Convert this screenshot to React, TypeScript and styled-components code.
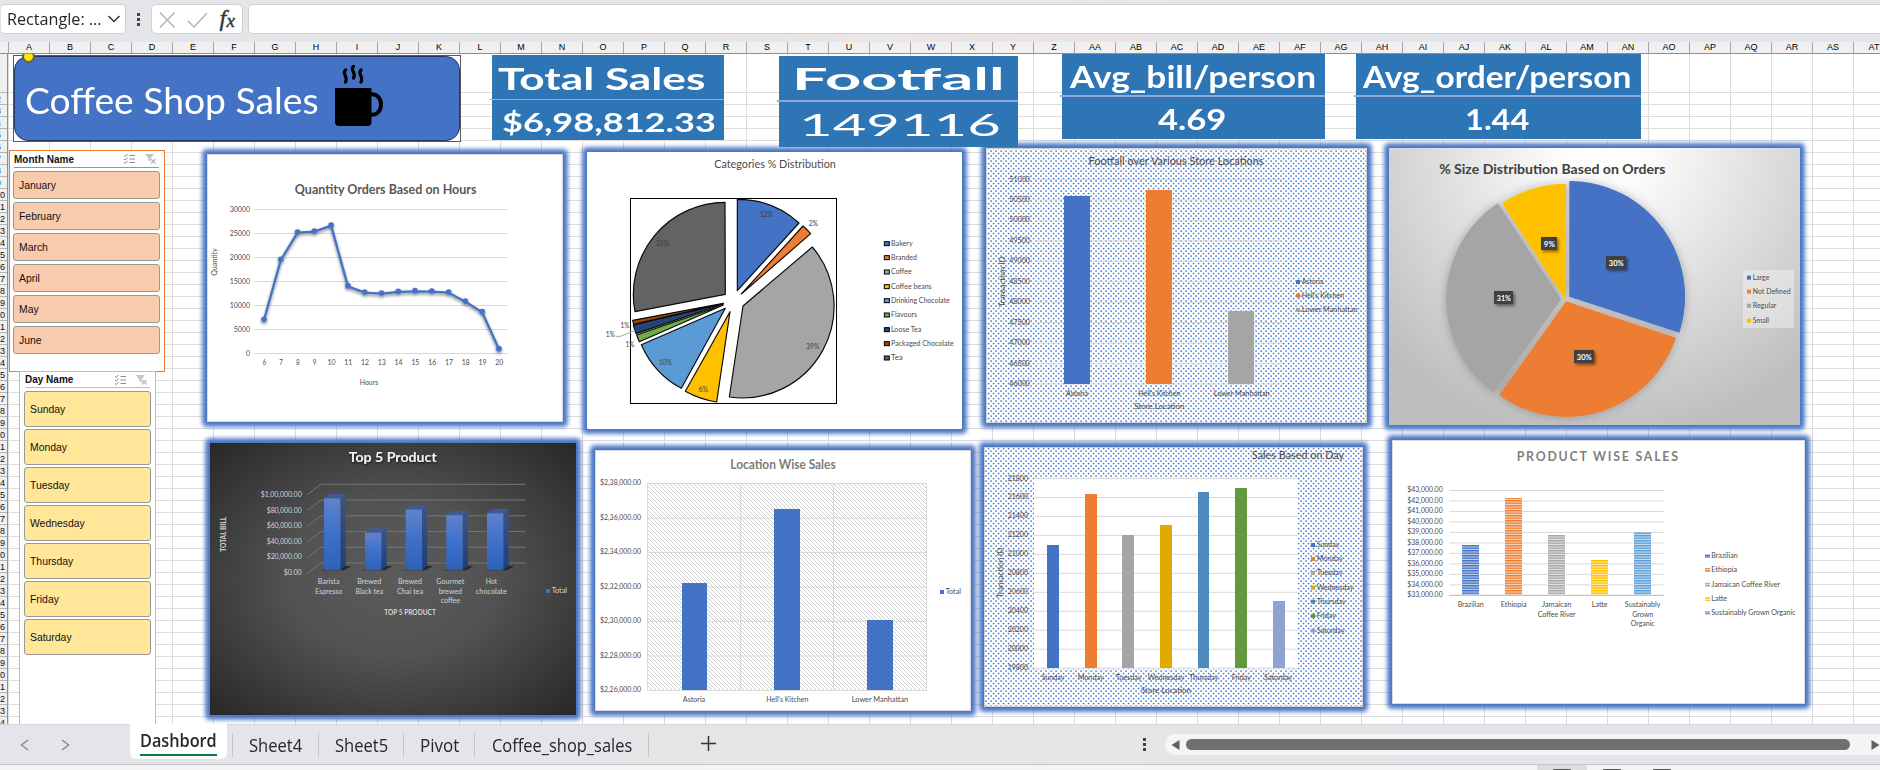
import React, { useLayoutEffect, useRef, useState } from "react";
import styled, { createGlobalStyle } from "styled-components";

const UI = '"Open Sans", "Noto Sans", sans-serif';
const OFFICE = 'Lato, "Open Sans", sans-serif';
const ARIAL = '"Liberation Sans", Arial, sans-serif';
const SHEET_TOP = 54;
const ROW_HEAD = 8;

const GlobalStyle = createGlobalStyle`
  * { box-sizing: border-box; }
  html, body { margin: 0; padding: 0; overflow: hidden; background: #fff; }
`;

const Page = styled.div`
  width: 1880px;
  height: 770px;
  display: flex;
  flex-direction: column;
  overflow: hidden;
  font-family: ${UI};
  background: #fff;
`;

/* ---------- stretched text ---------- */

const StretchBox = styled.span<{ $w: number }>`
  display: inline-block;
  width: ${(p) => p.$w}px;
  flex: none;
  white-space: nowrap;
  overflow: visible;
`;
const StretchInner = styled.span`
  display: inline-block;
  transform-origin: 0 50%;
`;

function Stretch({ w, children }: { w: number; children: React.ReactNode }) {
  const ref = useRef<HTMLSpanElement>(null);
  const [k, setK] = useState(1);
  useLayoutEffect(() => {
    if (ref.current && ref.current.offsetWidth) setK(w / ref.current.offsetWidth);
  }, [w]);
  return (
    <StretchBox $w={w}>
      <StretchInner ref={ref} style={{ transform: `scaleX(${k})` }}>
        {children}
      </StretchInner>
    </StretchBox>
  );
}

/* ---------- formula bar ---------- */

const FormulaBar = styled.div`
  height: 42px;
  flex: none;
  display: flex;
  align-items: flex-start;
  padding-top: 4px;
  background: linear-gradient(90deg, #e4e5ea 0, #e4e5e9 560px, #ebe5e7 900px, #ece4e4 1080px, #e4e5ea 1330px);
`;
const NameBox = styled.div`
  width: 126px;
  height: 30px;
  display: flex;
  align-items: center;
  padding-left: 6px;
  gap: 6px;
  border: 1px solid #d0d0d0;
  border-left-color: #e0e0e0;
  border-radius: 5px;
  background: #fff;
  color: #262626;
  font-size: 16px;
`;
const Grip = styled.div`
  width: 25px;
  height: 30px;
  display: flex;
  flex-direction: column;
  align-items: center;
  justify-content: center;
  gap: 2px;
`;
const GripDot = styled.i`
  width: 3px;
  height: 3px;
  background: #444;
`;
const FxBox = styled.div`
  width: 92px;
  height: 30px;
  display: flex;
  align-items: center;
  border: 1px solid #d0d0d0;
  border-radius: 5px;
  background: #fff;
`;
const FormulaField = styled.div`
  flex: 1;
  height: 30px;
  margin-left: 5px;
  border: 1px solid #d0d0d0;
  border-right: 0;
  border-radius: 5px 0 0 5px;
  background: #fff;
`;

/* ---------- headers ---------- */

const ColumnHeads = styled.div`
  height: 12px;
  flex: none;
  display: flex;
  background: #f0f0f0;
  border-bottom: 1px solid #8c918c;
  overflow: hidden;
`;
const Corner = styled.div`
  width: 9px;
  flex: none;
  border-right: 1px solid #a6a6a6;
`;
const ColumnHead = styled.div`
  width: 41px;
  flex: none;
  border-right: 1px solid #a6a6a6;
  font: 9px/11px ${ARIAL};
  text-align: center;
  color: #000;
`;
const SheetBody = styled.div`
  position: relative;
  height: 670px;
  flex: none;
  display: flex;
  overflow: hidden;
`;
const RowHeads = styled.div`
  width: ${ROW_HEAD}px;
  flex: none;
  background: #f0f0f0;
  border-right: 1px solid #8c918c;
  overflow: hidden;
`;
const RowHead = styled.div<{ $first?: boolean; $single?: boolean }>`
  height: ${(p) => (p.$first ? 39 : 12)}px;
  border-bottom: 1px solid #b5b5b5;
  display: flex;
  justify-content: flex-end;
  padding-right: ${(p) => (p.$single ? 6 : 2)}px;
  font: 9px/12px ${ARIAL};
  color: ${(p) => (p.$single ? "#1e6fc0" : "#101010")};
`;
const Grid = styled.div`
  flex: 1;
  background-color: #fff;
  background-image: linear-gradient(90deg, transparent 40px, #dcdcdc 40px),
    linear-gradient(transparent 11px, #dcdcdc 11px);
  background-size: 41px 100%, 100% 12px;
  background-position: 1px 0, 0 3px;
`;
const RowOneMask = styled.div`
  height: 37px;
  background: repeating-linear-gradient(90deg, #fff 0 40px, #dcdcdc 40px 41px);
  margin-left: 1px;
`;

/* ---------- floating objects ---------- */

const Floating = styled.div<{ $x: number; $y: number; $w: number; $h: number }>`
  position: absolute;
  left: ${(p) => p.$x}px;
  top: ${(p) => p.$y - SHEET_TOP}px;
  width: ${(p) => p.$w}px;
  height: ${(p) => p.$h}px;
`;

const Banner = styled(Floating)`
  border: 1px solid #595959;
  background: #fff;
`;
const BannerFill = styled.div`
  height: 100%;
  display: flex;
  align-items: flex-start;
  padding: 20px 0 0 10px;
  gap: 16px;
  border: 1px solid #1f3864;
  border-radius: 14px;
  background: #4472c4;
  color: #fff;
  font: 37px/46px ${OFFICE};
  svg { margin-top: -12px; }
`;
const Handle = styled(Floating)`
  border: 2px solid #5f5f5f;
  border-radius: 50%;
  background: #ffe600;
`;

const KpiCard = styled(Floating)<{ $head: number }>`
  display: grid;
  grid-template-rows: ${(p) => p.$head}px 1fr;
  background: #2e75b6;
  color: #fff;
  font-family: ${OFFICE};
`;
const KpiTitle = styled.div<{ $size: number; $pad: number; $line: number; $lead: number }>`
  margin-left: -2px;
  padding-left: ${(p) => p.$pad + 2}px;
  border-bottom: ${(p) => p.$line}px solid #8faadc;
  font-size: ${(p) => p.$size}px;
  font-weight: 700;
  line-height: ${(p) => p.$lead}px;
`;
const KpiValue = styled.div<{ $size: number; $pad: number; $bold: boolean }>`
  padding-left: ${(p) => p.$pad}px;
  font-size: ${(p) => p.$size}px;
  font-weight: ${(p) => (p.$bold ? 700 : 400)};
  line-height: 44px;
`;

const Slicer = styled(Floating)<{ $accent: string; $pad: string }>`
  display: flex;
  flex-direction: column;
  padding: ${(p) => p.$pad};
  border: 1px solid ${(p) => p.$accent};
  background: #fff;
  font-family: ${ARIAL};
`;
const SlicerHead = styled.div<{ $accent: string; $h: number }>`
  height: ${(p) => p.$h}px;
  flex: none;
  display: flex;
  align-items: center;
  justify-content: space-between;
  margin: 0 1px 0 1px;
  border-bottom: 1px solid ${(p) => p.$accent};
  font-size: 10px;
  font-weight: 700;
  color: #111;
`;
const SlicerTools = styled.div`
  display: flex;
  gap: 9px;
  padding-right: 2px;
`;
const SlicerItems = styled.div<{ $gap: number }>`
  display: flex;
  flex-direction: column;
  gap: ${(p) => p.$gap}px;
  margin-top: 3px;
`;
const SlicerItem = styled.div<{ $h: number; $fill: string }>`
  height: ${(p) => p.$h}px;
  display: flex;
  align-items: center;
  padding-left: 5px;
  border: 1px solid #999;
  border-radius: 3px;
  background: ${(p) => p.$fill};
  font-size: 10.4px;
  color: #111;
`;

const ChartFrame = styled(Floating)`
  background: #fff;
  border-radius: 1px;
  box-shadow: 0 0 5px 4px #4472c4, 0 0 4px 4px rgba(68, 114, 196, 0.45);
  svg { display: block; }
`;

/* ---------- tab bar ---------- */

const TabBar = styled.div`
  height: 40px;
  flex: none;
  display: flex;
  align-items: center;
  border-top: 1px solid #d6d6d6;
  background: linear-gradient(90deg, #e4e5ea 0, #e4e5e9 560px, #e8e5e6 900px, #e6e5e7 1100px, #e4e5ea 1400px);
  color: #262626;
  font-size: 17.5px;
`;
const TabNav = styled.div`
  width: 130px;
  display: flex;
  gap: 26px;
  padding-left: 17px;
`;
const ActiveTab = styled.div`
  width: 97px;
  height: 35px;
  align-self: flex-start;
  margin-top: -1px;
  padding: 4px 10px 0;
  border-radius: 0 0 6px 6px;
  background: #fff;
  font-weight: 600;
`;
const ActiveLabel = styled.div`
  height: 28px;
  border-bottom: 2px solid #107c41;
`;
const Tab = styled.div<{ $w: number }>`
  width: ${(p) => p.$w}px;
  height: 24px;
  display: flex;
  align-items: center;
  justify-content: center;
  border-right: 1px solid #c4c4c4;
`;
const FirstDivider = styled.i`
  width: 1px;
  height: 24px;
  margin-left: 5px;
  background: #c4c4c4;
`;
const PlusButton = styled.div`
  width: 119px;
  display: flex;
  justify-content: center;
  padding-bottom: 2px;
`;
const TabSpacer = styled.div`
  flex: 1;
`;
const ScrollArea = styled.div`
  display: flex;
  align-items: center;
  gap: 8px;
`;
const ScrollTrack = styled.div`
  width: 715px;
  height: 21px;
  display: flex;
  align-items: center;
  gap: 6px;
  padding-left: 6px;
  border-radius: 10px 0 0 10px;
  background: #f5f5f5;
`;
const ScrollThumb = styled.div`
  width: 664px;
  height: 11px;
  border-radius: 6px;
  background: #707070;
`;
const ScrollGap = styled.i`
  width: 9px;
`;

const StatusBar = styled.div`
  height: 6px;
  flex: none;
  display: flex;
  justify-content: flex-end;
  padding-right: 193px;
  border-top: 1px solid #c6c6c6;
  background: #f4f4f4;
`;
const ViewButton = styled.div<{ $on?: boolean }>`
  width: 50px;
  display: flex;
  justify-content: center;
  align-items: flex-end;
  background: ${(p) => (p.$on ? "#dcdcdc" : "transparent")};
`;
const ViewGlyph = styled.i`
  width: 18px;
  height: 1px;
  border-radius: 1px 1px 0 0;
  background: #555;
`;

/* ---------- chart helpers: drawing units are thirds of a pixel ---------- */

type ChartProps = { x: number; y: number; w: number; h: number; ox: number; oy: number; children: React.ReactNode };
function Chart({ x, y, w, h, ox, oy, children }: ChartProps) {
  return (
    <ChartFrame $x={x} $y={y} $w={w} $h={h}>
      <svg width={w} height={h} viewBox={`${(x - ox) * 3} ${(y - oy) * 3} ${w * 3} ${h * 3}`} fontFamily={OFFICE}>
        {children}
      </svg>
    </ChartFrame>
  );
}

type LabelProps = {
  x: number; y: number; w: number; t: string; size?: number; at?: "start" | "middle" | "end";
  fill?: string; bold?: boolean; turn?: boolean; shadow?: boolean;
};
function Label({ x, y, w, t, size = 22, at = "middle", fill = "#4c4c4c", bold, turn, shadow }: LabelProps) {
  return (
    <text
      x={x} y={y} fontSize={size} textAnchor={at} fill={fill} fontWeight={bold ? 700 : 400}
      textLength={w} lengthAdjust="spacingAndGlyphs"
      transform={turn ? `rotate(-90 ${x} ${y})` : undefined}
      filter={shadow ? "url(#titleShadow)" : undefined}
    >
      {t}
    </text>
  );
}

type ScaleProps = {
  x1: number; x2: number; top: number; step: number; labels: string[]; right: number; w: number; fill?: string; color?: string; dy?: number;
};
function Scale({ x1, x2, top, step, labels, right, w, fill, color = "#d9d9d9", dy = 6 }: ScaleProps) {
  return (
    <>
      {labels.map((t, i) => (
        <line key={"l" + i} x1={x1} x2={x2} y1={top + i * step} y2={top + i * step} stroke={color} strokeWidth={3} />
      ))}
      {labels.map((t, i) => (
        <Label key={i} x={right} y={top + i * step + dy} w={t === "0" ? 12 : t === "5000" ? 49 : w} t={t} at="end" fill={fill} />
      ))}
    </>
  );
}

type LegendItem = [string, string, number, number];
function Legend({ x, tx, items, outline, size = 12 }: { x: number; tx: number; items: LegendItem[]; outline?: boolean; size?: number }) {
  return (
    <>
      {items.map(([t, c, y, w]) => (
        <g key={t}>
          <rect x={x} y={y - 6} width={size} height={12} fill={c} stroke={outline ? "#000" : "none"} strokeWidth={3} />
          <Label x={tx} y={y + 7} w={w} t={t} at="start" />
        </g>
      ))}
    </>
  );
}

const slice = (a: number[], b: number[], c: number[], r: number, big = 0) =>
  `M${a[0]} ${a[1]}L${b[0]} ${b[1]}A${r} ${r} 0 ${big} 1 ${c[0]} ${c[1]}Z`;

const DefsHost = styled.svg`
  position: absolute;
`;

function Defs() {
  return (
    <DefsHost width="0" height="0">
      <defs>
        <pattern id="dots" width="15" height="15" patternUnits="userSpaceOnUse">
          <rect width="15" height="15" fill="#fff" />
          <rect x="1" y="1" width="4.500" height="4.500" fill="#4472c4" />
          <rect x="8.500" y="8.500" width="4.500" height="4.500" fill="#4472c4" />
        </pattern>
        <pattern id="hatch" width="12" height="12" patternUnits="userSpaceOnUse">
          <rect width="12" height="12" fill="#fff" />
          {[0, 1, 2, 3].map((i) => (
            <rect key={i} x={i * 3} y={i * 3} width="3" height="3" fill="#cfcfcf" />
          ))}
        </pattern>
        {["4472c4", "ed7d31", "a5a5a5", "ffc000", "5b9bd5"].map((c) => (
          <pattern key={c} id={"st" + c} width="7.500" height="7.500" patternUnits="userSpaceOnUse">
            <rect width="7.500" height="7.500" fill="#fff" />
            <rect width="7.500" height="7.500" fill={"#" + c} opacity="0.3" />
            <rect width="7.500" height="4.300" fill={"#" + c} />
          </pattern>
        ))}
        <radialGradient id="silver" gradientUnits="userSpaceOnUse" cx="700" cy="10" r="900">
          <stop offset="0" stopColor="#fff" />
          <stop offset="0.15" stopColor="#fcfcfc" />
          <stop offset="1" stopColor="#bdbdbd" />
        </radialGradient>
        <radialGradient id="coal" cx="0.5" cy="0.5" r="0.72">
          <stop offset="0" stopColor="#5b5b5b" />
          <stop offset="0.4" stopColor="#525252" />
          <stop offset="1" stopColor="#262626" />
        </radialGradient>
        <linearGradient id="barFront" x1="0" y1="0" x2="0" y2="1">
          <stop offset="0" stopColor="#6083cb" />
          <stop offset="0.5" stopColor="#3e70ca" />
          <stop offset="1" stopColor="#2e61ba" />
        </linearGradient>
        <linearGradient id="barSide" x1="0" y1="0" x2="0" y2="1">
          <stop offset="0" stopColor="#3f5484" />
          <stop offset="1" stopColor="#1e3f79" />
        </linearGradient>
        <filter id="titleShadow" x="-10%" y="-30%" width="120%" height="180%">
          <feDropShadow dx="2" dy="5" stdDeviation="3" floodColor="#000" floodOpacity="0.6" />
        </filter>
        <filter id="lineShadow" x="-10%" y="-10%" width="120%" height="120%">
          <feDropShadow dx="0" dy="5" stdDeviation="4" floodColor="#000" floodOpacity="0.5" />
        </filter>
        <filter id="pieShadow" x="-15%" y="-15%" width="130%" height="130%">
          <feDropShadow dx="0" dy="0" stdDeviation="14" floodColor="#000" floodOpacity="0.25" />
        </filter>
        <filter id="tagShadow" x="-30%" y="-30%" width="170%" height="190%">
          <feDropShadow dx="5" dy="6" stdDeviation="4" floodColor="#000" floodOpacity="0.45" />
        </filter>
      </defs>
    </DefsHost>
  );
}

/* ---------- charts ---------- */

const hourY = [538, 358, 276, 273, 255, 437, 456, 459, 454, 452, 453, 456, 483, 515, 626];

function HoursChart() {
  const px = (i: number) => 222 + i * 50.35;
  return (
    <Chart x={207} y={154} w={356} h={268} ox={190} oy={140}>
      <rect x="52.5" y="43.5" width="1065" height="801" fill="#fff" stroke="#d9d9d9" strokeWidth="3" />
      <Label x={587} y={162} w={545} t="Quantity Orders Based on Hours" size={38} bold fill="#595959" />
      <Scale x1={195} x2={953} top={208.5} step={72} right={180} w={61} labels={["30000", "25000", "20000", "15000", "10000", "5000", "0"]} />
      <g filter="url(#lineShadow)">
        <polyline points={hourY.map((y, i) => `${px(i)},${y + 2}`).join(" ")} fill="none" stroke="#4472c4" strokeWidth="7" strokeLinejoin="round" />
        {hourY.map((y, i) => <circle key={i} cx={px(i)} cy={y} r="8.5" fill="#4472c4" />)}
      </g>
      {hourY.map((_, i) => <Label key={i} x={px(i) + 1} y={675} w={i < 4 ? 11 : 24} t={String(i + 6)} />)}
      <Label x={537} y={735} w={55} t="Hours" />
      <Label x={80} y={366} w={83} t="Quantity" turn />
    </Chart>
  );
}

function CategoriesChart() {
  const S: [string, number[], number[], number[], number][] = [
    ["#4472c4", [502, 452], [502, 178], [687, 249], 274],
    ["#ed7d31", [514, 462], [699, 258], [722, 281], 274],
    ["#a5a5a5", [519, 498], [727, 321], [478, 771], 275],
    ["#ffc000", [480, 515], [440, 786], [346, 754], 274],
    ["#5b9bd5", [466, 505], [334, 745], [214, 614], 274],
    ["#70ad47", [460, 495], [208, 605], [200, 585], 274],
    ["#264478", [460, 492], [198, 581], [190, 555], 274],
    ["#9e480e", [460, 490], [191, 553], [188, 541], 274],
    ["#636363", [466, 463], [195, 515], [465, 187], 276],
  ];
  return (
    <Chart x={587} y={152} w={375} h={277} ox={570} oy={140}>
      <Label x={615} y={84} w={365} t="Categories % Distribution" size={35} />
      <rect x="181.5" y="175.5" width="618" height="615" fill="#fff" stroke="#000" strokeWidth="3" />
      {S.map(([c, a, b, d, r]) => (
        <path key={c} d={slice(a, b, d, r)} fill={c} stroke="#0a0a0a" strokeWidth="3.5" strokeLinejoin="round" />
      ))}
      <path d="M138 589 L152 589 L196 571" fill="none" stroke="#a6a6a6" strokeWidth="3" />
      <Label x={589} y={230} w={40} t="12%" fill="#404040" />
      <Label x={730} y={258} w={28} t="2%" fill="#404040" />
      <Label x={728} y={627} w={40} t="39%" fill="#404040" />
      <Label x={400} y={756} w={29} t="6%" fill="#404040" />
      <Label x={286} y={675} w={40} t="10%" fill="#404040" />
      <Label x={180} y={620} w={27} t="1%" fill="#404040" />
      <Label x={121} y={590} w={27} t="1%" fill="#404040" />
      <Label x={165} y={563} w={27} t="1%" fill="#404040" />
      <Label x={277} y={317} w={40} t="28%" fill="#404040" />
      <Legend x={943} tx={963} outline size={15} items={[
        ["Bakery", "#4472c4", 311, 65], ["Branded", "#ed7d31", 353, 78], ["Coffee", "#a5a5a5", 396, 62],
        ["Coffee beans", "#ffc000", 440, 122], ["Drinking Chocolate", "#5b9bd5", 482, 176], ["Flavours", "#70ad47", 525, 78],
        ["Loose Tea", "#264478", 569, 91], ["Packaged Chocolate", "#9e480e", 611, 188], ["Tea", "#636363", 654, 35],
      ]} />
    </Chart>
  );
}

function Bars({ list, bottom }: { list: [number, number, number, string][]; bottom: number }) {
  return (
    <>
      {list.map(([x, w, y, c]) => <rect key={x} x={x} y={y} width={w} height={bottom - y} fill={c} />)}
    </>
  );
}

function FootfallChart() {
  return (
    <Chart x={986} y={148} w={381} h={275} ox={970} oy={140}>
      <rect x="49.5" y="25.5" width="1140" height="822" fill="url(#dots)" stroke="#d0d0d0" strokeWidth="3" />
      <Label x={618} y={75} w={525} t="Footfall over Various Store Locations" size={35} />
      <Scale x1={197} x2={937} top={118.5} step={61.35} right={180} w={62} labels={Array.from({ length: 11 }, (_, i) => String(51000 - i * 500))} />
      <Bars bottom={732} list={[[282, 78, 168, "#4472c4"], [528, 78, 150, "#ed7d31"], [774, 78, 513, "#a5a5a5"]]} />
      <Label x={321} y={768} w={66} t="Astoria" />
      <Label x={568} y={768} w={126} t="Hell's Kitchen" />
      <Label x={815} y={768} w={168} t="Lower Manhattan" />
      <Label x={568} y={806} w={150} t="Store Location" size={24} />
      <Label x={104} y={425} w={152} t="Transaction ID" size={24} turn />
      <Legend x={978} tx={995} items={[["Astoria", "#4472c4", 426, 65], ["Hell's Kitchen", "#ed7d31", 467, 127], ["Lower Manhattan", "#a5a5a5", 510, 168]]} />
    </Chart>
  );
}

function SizeChart() {
  const tags: [number, number, number, string][] = [[708, 348, 60, "30%"], [612, 630, 60, "30%"], [372, 453, 57, "31%"], [513, 291, 48, "9%"]];
  return (
    <Chart x={1389} y={148} w={411} h={277} ox={1370} oy={140}>
      <rect x="57" y="24" width="1233" height="831" fill="url(#silver)" />
      <g filter="url(#pieShadow)">
        <path d={slice([598, 470], [598, 123], [928, 578], 347)} fill="#4472c4" />
        <path d={slice([588, 484], [918, 593], [387, 766], 347)} fill="#ed7d31" />
        <path d={slice([574, 478], [371, 759], [384, 189], 347)} fill="#a5a5a5" />
        <path d={slice([588, 482], [396, 190], [588, 131], 350)} fill="#ffc000" />
      </g>
      <Label x={547} y={102} w={679} t="% Size Distribution Based on Orders" size={39} bold fill="#404040" />
      {tags.map(([x, y, w, t]) => (
        <g key={x}>
          <rect x={x} y={y} width={w} height="39" fill="#404040" filter="url(#tagShadow)" />
          <Label x={x + w / 2 + 1} y={y + 29} w={w - 15} t={t} size={23} bold fill="#fff" />
        </g>
      ))}
      <rect x="1119" y="390" width="153" height="174" fill="#f2f2f2" opacity="0.5" />
      <Legend x={1131} tx={1148} items={[["Large", "#4472c4", 413, 50], ["Not Defined", "#ed7d31", 455, 114], ["Regular", "#a5a5a5", 497, 71], ["Small", "#ffc000", 542, 49]]} />
    </Chart>
  );
}

function TopProductsChart() {
  const bars = [[402, 205], [525, 308], [647, 239], [769, 256], [891, 250]];
  const names: [number, [string, number][]][] = [
    [416, [["Barista", 65], ["Espresso", 81]]],
    [538, [["Brewed", 72], ["Black tea", 83]]],
    [660, [["Brewed", 72], ["Chai tea", 78]]],
    [781, [["Gourmet", 84], ["brewed", 70], ["coffee", 58]]],
    [904, [["Hot", 34], ["chocolate", 93]]],
  ];
  const ticks: [string, number][] = [["$1,00,000.00", 123], ["$80,000.00", 105], ["$60,000.00", 105], ["$40,000.00", 105], ["$20,000.00", 105], ["$0.00", 54]];
  const soft = "#d4d4d4";
  return (
    <Chart x={210} y={443} w={366} h={272} ox={190} oy={430}>
      <rect x="60" y="39" width="1098" height="816" fill="url(#coal)" />
      <Label x={608} y={97} w={264} t="Top 5 Product" size={40} bold fill="#f2f2f2" shadow />
      {ticks.map(([t, w], i) => (
        <g key={t}>
          <path d={`M352 ${194 + i * 47.2}L393 ${163 + i * 47.2}H1007`} fill="none" stroke="#757575" strokeWidth="3" />
          <Label x={335} y={201 + i * 46.8} w={w} t={t} at="end" fill={soft} />
        </g>
      ))}
      {bars.map(([x, y]) => (
        <g key={x}>
          <path d={`M${x - 6} 421L${x + 14} 408H${x + 82}L${x + 60} 421Z`} fill="#1d1d1d" opacity="0.8" />
          <path d={`M${x} ${y}L${x + 16} ${y - 13}H${x + 65}L${x + 49} ${y}Z`} fill="#405a97" />
          <path d={`M${x + 49} ${y}L${x + 65} ${y - 13}V407L${x + 49} 420Z`} fill="url(#barSide)" />
          <rect x={x} y={y} width="49" height={420 - y} fill="url(#barFront)" />
        </g>
      ))}
      {names.map(([x, lines]) => lines.map(([t, w], i) => <Label key={t + x} x={x} y={462 + i * 29} w={w} t={t} fill={soft} />))}
      <Label x={660} y={555} w={155} t="TOP 5 PRODUCT" bold fill={soft} size={21} />
      <Label x={108} y={313} w={105} t="TOTAL BILL" bold fill={soft} size={21} turn />
      <rect x="1068" y="477" width="12" height="12" fill="#3e70ca" />
      <Label x={1085} y={489} w={46} t="Total" at="start" fill={soft} />
    </Chart>
  );
}

function LocationChart() {
  return (
    <Chart x={595} y={450} w={376} h={261} ox={580} oy={430}>
      <rect x="46.5" y="61.5" width="1125" height="780" fill="#fff" stroke="#d9d9d9" strokeWidth="3" />
      <Label x={609} y={118} w={316} t="Location Wise Sales" size={39} bold fill="#7c7c7c" />
      <rect x="203" y="160" width="837" height="620" fill="url(#hatch)" />
      <Scale x1={202} x2={1041} top={160.5} step={103.5} right={183} w={123} labels={["$2,38,000.00", "$2,36,000.00", "$2,34,000.00", "$2,32,000.00", "$2,30,000.00", "$2,28,000.00", "$2,26,000.00"]} dy={5} />
      {[202.5, 481.5, 760.5, 1039.5].map((x) => <line key={x} x1={x} x2={x} y1="160" y2="782" stroke="#d9d9d9" strokeWidth="3" />)}
      <Bars bottom={780} list={[[306, 75, 459, "#4472c4"], [582, 78, 237, "#4472c4"], [861, 78, 570, "#4472c4"]]} />
      <Label x={342} y={816} w={67} t="Astoria" />
      <Label x={622} y={816} w={126} t="Hell's Kitchen" />
      <Label x={900} y={816} w={169} t="Lower Manhattan" />
      <Legend x={1080} tx={1097} items={[["Total", "#4472c4", 486, 46]]} />
    </Chart>
  );
}

const days: [string, string, number, number, number, number, number, number][] = [
  ["Sunday", "#4472c4", 231, 36, 345, 249, 68, 345],
  ["Monday", "#ed7d31", 345, 36, 192, 362, 78, 387],
  ["Tuesday", "#a5a5a5", 456, 36, 315, 476, 78, 429],
  ["Wednesday", "#e2aa00", 570, 36, 285, 588, 110, 473],
  ["Thursday", "#4f8abe", 684, 33, 186, 701, 87, 515],
  ["Friday", "#62993e", 795, 36, 174, 814, 58, 558],
  ["Saturday", "#8fa2d4", 909, 36, 513, 924, 84, 602],
];

function DayChart() {
  return (
    <Chart x={984} y={447} w={379} h={260} ox={970} oy={430}>
      <rect x="43.5" y="52.5" width="1134" height="777" fill="url(#dots)" stroke="#d0d0d0" strokeWidth="3" />
      <rect x="192" y="145" width="792" height="571" fill="#fff" />
      <Label x={984} y={87} w={277} t="Sales Based on Day" size={35} />
      <Scale x1={192} x2={984} top={145.5} step={56.9} right={174} w={61} labels={Array.from({ length: 11 }, (_, i) => String(21800 - i * 200))} />
      <Bars bottom={714} list={days.map(([, c, x, w, y]) => [x, w, y, c])} />
      {days.map(([t, , , , , cx, w]) => <Label key={t} x={cx} y={750} w={w} t={t} />)}
      <Label x={588} y={788} w={150} t="Store Location" size={24} />
      <Label x={98} y={428} w={150} t="Transaction ID" size={24} turn />
      <Legend x={1023} tx={1040} items={days.map(([t, c, , , , , w, ly]) => [t, c, ly, w])} />
    </Chart>
  );
}

function ProductChart() {
  const names: [number, [string, number][]][] = [
    [302, [["Brazilian", 78]]],
    [431, [["Ethiopia", 77]]],
    [560, [["Jamaican", 88], ["Coffee River", 114]]],
    [689, [["Latte", 47]]],
    [818, [["Sustainably", 107], ["Grown", 63], ["Organic", 72]]],
  ];
  return (
    <Chart x={1392} y={440} w={413} h={264} ox={1370} oy={430}>
      <rect x="67.5" y="31.5" width="1236" height="789" fill="#fff" stroke="#d9d9d9" strokeWidth="3" />
      <text x="440" y="94" fontSize="37" fontWeight="700" fill="#7f7f7f" textLength="484" lengthAdjust="spacing">PRODUCT WISE SALES</text>
      <Scale x1={238} x2={881} top={181.5} step={31.45} right={218} w={106} labels={Array.from({ length: 11 }, (_, i) => `$${43 - i},000.00`)} dy={5} />
      <line x1="238" x2="881" y1="496" y2="496" stroke="#bfbfbf" strokeWidth="3" />
      <Bars bottom={495} list={[[276, 51, 345, "url(#st4472c4)"], [405, 51, 204, "url(#sted7d31)"], [534, 51, 315, "url(#sta5a5a5)"], [663, 51, 390, "url(#stffc000)"], [792, 51, 306, "url(#st5b9bd5)"]]} />
      {names.map(([x, lines]) => lines.map(([t, w], i) => <Label key={t} x={x} y={531 + i * 29} w={w} t={t} />))}
      <Legend x={1005} tx={1024} size={15} items={[
        ["Brazilian", "url(#st4472c4)", 378, 79], ["Ethiopia", "url(#sted7d31)", 420, 77], ["Jamaican Coffee River", "url(#sta5a5a5)", 464, 206],
        ["Latte", "url(#stffc000)", 507, 47], ["Sustainably Grown Organic", "url(#st5b9bd5)", 549, 253],
      ]} />
    </Chart>
  );
}

/* ---------- small drawings ---------- */

function Mug() {
  return (
    <svg width="48" height="64" viewBox="0 0 48 64" fill="none">
      <path d="M0 23H36.5V57a4 4 0 0 1-4 4H4a4 4 0 0 1-4-4Z" fill="#000" />
      <path d="M36 29.500c6-1 10 4 10 10s-4 11-10 10" stroke="#000" strokeWidth="4" />
      <path d="M10.500 5c-4 4 3 6 0 12M18.500 1c-4 4 3 6 0 12M26 5c-4 4 3 6 0 12" stroke="#000" strokeWidth="3.200" strokeLinecap="round" />
    </svg>
  );
}

function ToolIcons() {
  return (
    <SlicerTools>
      <svg width="12" height="12" viewBox="0 0 12 12" fill="none" stroke="#8a8a8a">
        <path d="M0 2.500l1.200 1L3.500 1M0 6l1.200 1L3.500 4.500M0 9.500l1.200 1L3.500 8M5.500 2.500H11M5.500 6H11M5.500 9.500H11" />
      </svg>
      <svg width="12" height="12" viewBox="0 0 12 12">
        <path d="M0 1H9L5.500 5.500V9L3.500 7.500V5.500Z" fill="#c4c4c4" />
        <path d="M6 6l4.500 4.500M10.500 6L6 10.500" stroke="#b5b5b5" strokeWidth="1.200" />
      </svg>
    </SlicerTools>
  );
}

const colName = (i: number) => (i < 26 ? String.fromCharCode(65 + i) : "A" + String.fromCharCode(39 + i));

type Kpi = {
  x: number; y: number; w: number; h: number; head: number; line: number; lead: number; title: string; tp: number; tw: number; ts: number;
  value: string; vp: number; vw: number; vs: number; bold?: boolean;
};
const kpis: Kpi[] = [
  { x: 492, y: 55, w: 232, h: 85, head: 45, line: 1, lead: 46, title: "Total Sales", tp: 6, tw: 207, ts: 31, value: "$6,98,812.33", vp: 10, vw: 214, vs: 27, bold: true },
  { x: 779, y: 56, w: 239, h: 91, head: 46, line: 2, lead: 45, title: "Footfall", tp: 13, tw: 212, ts: 31, value: "149116", vp: 20, vw: 202, vs: 31 },
  { x: 1062, y: 54, w: 263, h: 85, head: 43, line: 2, lead: 44, title: "Avg_bill/person", tp: 8, tw: 246, ts: 30, value: "4.69", vp: 96, vw: 68, vs: 29, bold: true },
  { x: 1356, y: 54, w: 285, h: 85, head: 43, line: 2, lead: 44, title: "Avg_order/person", tp: 7, tw: 269, ts: 30, value: "1.44", vp: 109, vw: 64, vs: 29, bold: true },
];

export default function App() {
  return (
    <Page>
      <GlobalStyle />
      <Defs />
      <FormulaBar>
        <NameBox>
          <Stretch w={95}>Rectangle: ...</Stretch>
          <svg width="12" height="8" viewBox="0 0 12 8" fill="none" stroke="#333" strokeWidth="1.500"><path d="M0.500 1L6 6.500L11.500 1" /></svg>
        </NameBox>
        <Grip><GripDot /><GripDot /><GripDot /></Grip>
        <FxBox>
          <svg width="90" height="28" viewBox="0 0 90 28" fill="none" stroke="#b4b4b4" strokeWidth="1.500">
            <path d="M8 7.500L22.500 22.500M22.500 7.500L8 22.500M36 16l6 6L55 8" />
            <text x="67.500" y="20.500" fontFamily='"Liberation Serif", serif' fontSize="24" fontStyle="italic" fill="#333" stroke="#333" strokeWidth="0.400">f</text>
            <text x="74.500" y="22" fontFamily='"Liberation Serif", serif' fontSize="19" fontStyle="italic" fill="#333" stroke="#333" strokeWidth="0.400">x</text>
          </svg>
        </FxBox>
        <FormulaField />
      </FormulaBar>

      <ColumnHeads>
        <Corner><svg width="7" height="9" viewBox="0 0 7 9"><path d="M5.500 4V8H1.500Z" fill="#b0b0b0" /></svg></Corner>
        {Array.from({ length: 46 }, (_, i) => <ColumnHead key={i}>{colName(i)}</ColumnHead>)}
      </ColumnHeads>

      <SheetBody>
        <RowHeads>
          <RowHead $first />
          {Array.from({ length: 53 }, (_, i) => <RowHead key={i} $single={i < 8}>{(i + 2) % 10}</RowHead>)}
        </RowHeads>
        <Grid><RowOneMask /></Grid>

        <HoursChart />
        <CategoriesChart />
        <FootfallChart />
        <SizeChart />
        <TopProductsChart />
        <LocationChart />
        <DayChart />
        <ProductChart />

        <Banner $x={13} $y={55} $w={448} $h={87}>
          <BannerFill>
            <Stretch w={294}>Coffee Shop Sales</Stretch>
            <Mug />
          </BannerFill>
        </Banner>
        <Handle $x={22} $y={50} $w={13} $h={13} />

        {kpis.map((k) => (
          <KpiCard key={k.title} $x={k.x} $y={k.y} $w={k.w} $h={k.h} $head={k.head}>
            <KpiTitle $size={k.ts} $pad={k.tp} $line={k.line} $lead={k.lead}><Stretch w={k.tw}>{k.title}</Stretch></KpiTitle>
            <KpiValue $size={k.vs} $pad={k.vp} $bold={!!k.bold}><Stretch w={k.vw}>{k.value}</Stretch></KpiValue>
          </KpiCard>
        ))}

        <Slicer $x={9} $y={150} $w={156} $h={222} $accent="#ed7d31" $pad="0 4px 0 3px">
          <SlicerHead $accent="#ed7d31" $h={17}>Month Name<ToolIcons /></SlicerHead>
          <SlicerItems $gap={3}>
            {["January", "February", "March", "April", "May", "June"].map((m) => <SlicerItem key={m} $h={28} $fill="#f8cbad">{m}</SlicerItem>)}
          </SlicerItems>
        </Slicer>
        <Slicer $x={19} $y={371} $w={137} $h={370} $accent="#f5c015" $pad="0 4px 0 4px">
          <SlicerHead $accent="#f5c015" $h={16}>Day Name<ToolIcons /></SlicerHead>
          <SlicerItems $gap={2}>
            {days.map(([d]) => <SlicerItem key={d} $h={36} $fill="#ffe699">{d}</SlicerItem>)}
          </SlicerItems>
        </Slicer>
      </SheetBody>

      <TabBar>
        <TabNav>
          <svg width="14" height="12" viewBox="0 0 14 12" fill="none" stroke="#8a8a8a" strokeWidth="1.500"><path d="M11 1L4.500 6L11 11" /></svg>
          <svg width="14" height="12" viewBox="0 0 14 12" fill="none" stroke="#8a8a8a" strokeWidth="1.500"><path d="M5 1L11.500 6L5 11" /></svg>
        </TabNav>
        <ActiveTab><ActiveLabel><Stretch w={77}>Dashbord</Stretch></ActiveLabel></ActiveTab>
        <FirstDivider />
        <Tab $w={86}><Stretch w={53}>Sheet4</Stretch></Tab>
        <Tab $w={85}><Stretch w={53}>Sheet5</Stretch></Tab>
        <Tab $w={71}><Stretch w={39}>Pivot</Stretch></Tab>
        <Tab $w={174}><Stretch w={140}>Coffee_shop_sales</Stretch></Tab>
        <PlusButton>
          <svg width="15" height="15" viewBox="0 0 15 15" stroke="#333" strokeWidth="1.500"><path d="M7.500 0V15M0 7.500H15" /></svg>
        </PlusButton>
        <TabSpacer />
        <ScrollArea>
          <Grip><GripDot /><GripDot /><GripDot /></Grip>
          <ScrollTrack>
            <svg width="9" height="12" viewBox="0 0 9 12"><path d="M8.500 1V11L0.500 6Z" fill="#606060" /></svg>
            <ScrollThumb />
            <ScrollGap />
            <svg width="9" height="12" viewBox="0 0 9 12"><path d="M0.500 1V11L8.500 6Z" fill="#606060" /></svg>
          </ScrollTrack>
        </ScrollArea>
      </TabBar>
      <StatusBar>
        <ViewButton $on><ViewGlyph /></ViewButton>
        <ViewButton><ViewGlyph /></ViewButton>
        <ViewButton><ViewGlyph /></ViewButton>
      </StatusBar>
    </Page>
  );
}
